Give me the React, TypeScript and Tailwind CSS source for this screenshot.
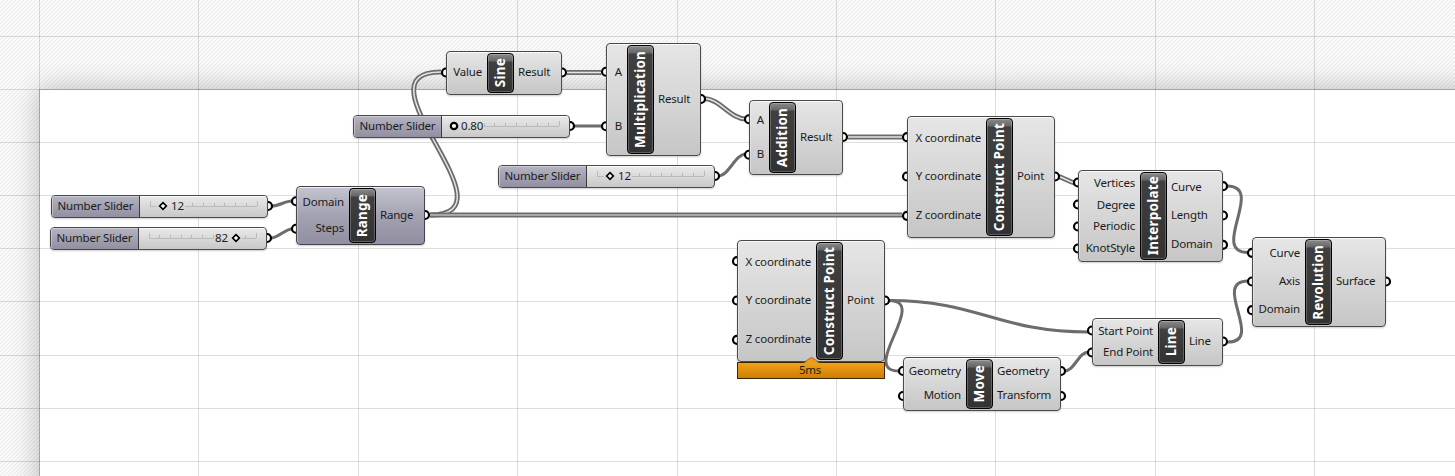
type NodeData = {
  title: string;
  x: number;
  y: number;
  w: number;
  h: number;
  left: number;
  inputs: string[];
  outputs: string[];
  selected?: boolean;
};

type SliderData = {
  x: number;
  y: number;
  value: string;
  knob: number;
  text: number;
  round?: boolean;
};

type Wire = { from: [number, number]; to: [number, number]; bend: number; kind: "single" | "double" | "tree" };

const NODES: NodeData[] = [
  { title: "Sine", x: 446, y: 51, w: 116, h: 44, left: 41, inputs: ["Value"], outputs: ["Result"] },
  { title: "Multiplication", x: 606, y: 43, w: 95, h: 113, left: 21, inputs: ["A", "B"], outputs: ["Result"] },
  { title: "Addition", x: 749, y: 100, w: 94, h: 75, left: 20, inputs: ["A", "B"], outputs: ["Result"] },
  { title: "Construct Point", x: 907, y: 116, w: 148, h: 122, left: 79, inputs: ["X coordinate", "Y coordinate", "Z coordinate"], outputs: ["Point"] },
  { title: "Interpolate", x: 1078, y: 170, w: 145, h: 92, left: 62, inputs: ["Vertices", "Degree", "Periodic", "KnotStyle"], outputs: ["Curve", "Length", "Domain"] },
  { title: "Revolution", x: 1252, y: 237, w: 134, h: 90, left: 53, inputs: ["Curve", "Axis", "Domain"], outputs: ["Surface"] },
  { title: "Construct Point", x: 737, y: 240, w: 148, h: 122, left: 79, inputs: ["X coordinate", "Y coordinate", "Z coordinate"], outputs: ["Point"] },
  { title: "Move", x: 903, y: 357, w: 158, h: 54, left: 63, inputs: ["Geometry", "Motion"], outputs: ["Geometry", "Transform"] },
  { title: "Line", x: 1092, y: 318, w: 131, h: 48, left: 66, inputs: ["Start Point", "End Point"], outputs: ["Line"] },
  { title: "Range", x: 296, y: 186, w: 129, h: 59, left: 53, inputs: ["Domain", "Steps"], outputs: ["Range"], selected: true },
];

const SLIDERS: SliderData[] = [
  { x: 51, y: 195, value: "12", knob: 112, text: 119 },
  { x: 50, y: 227, value: "82", knob: 186, text: 164 },
  { x: 353, y: 115, value: "0.80", knob: 101, text: 107, round: true },
  { x: 498, y: 165, value: "12", knob: 112, text: 119 },
];

const WIRES: Wire[] = [
  { from: [272, 206], to: [292, 201], bend: 7, kind: "single" },
  { from: [271, 238], to: [292, 229], bend: 7, kind: "single" },
  { from: [430, 215], to: [441, 72], bend: 90, kind: "double" },
  { from: [430, 215], to: [902, 215], bend: 200, kind: "tree" },
  { from: [567, 72.5], to: [601, 72.5], bend: 15, kind: "double" },
  { from: [575, 126], to: [602, 126], bend: 12, kind: "single" },
  { from: [704, 98.5], to: [746, 119], bend: 16, kind: "double" },
  { from: [718, 176], to: [746, 154], bend: 11, kind: "single" },
  { from: [848, 137], to: [902, 137], bend: 25, kind: "double" },
  { from: [1058, 176.5], to: [1075, 183], bend: 3, kind: "double" },
  { from: [1227, 186], to: [1248, 252.5], bend: 39, kind: "single" },
  { from: [1228, 342], to: [1248, 281], bend: 37, kind: "single" },
  { from: [889, 300.5], to: [899, 371], bend: 41, kind: "single" },
  { from: [889, 300.5], to: [1088, 332], bend: 90, kind: "single" },
  { from: [1064, 371], to: [1089, 352], bend: 11, kind: "single" },
];

const GRID_X = [39, 198, 358, 517, 677, 836, 995, 1155, 1314];
const GRID_Y = [36, 89, 142, 195, 248, 301, 355, 408, 461];

const wirePath = ({ from, to, bend }: Wire) =>
  `M${from[0]} ${from[1]}C${from[0] + bend} ${from[1]} ${to[0] - bend} ${to[1]} ${to[0]} ${to[1]}`;

const portY = (node: NodeData, index: number, count: number) =>
  node.y + 1.5 + ((node.h - 4) / count) * (index + 0.5);

function Wires() {
  return (
    <svg className="absolute inset-0" width="1455" height="476" fill="none">
      <g stroke="#000" strokeOpacity="0.13" shapeRendering="crispEdges">
        {GRID_X.map((x) => (
          <path key={x} d={`M${x + 0.5} 0V476`} />
        ))}
        {GRID_Y.map((y) => (
          <path key={y} d={`M0 ${y + 0.5}H1455`} />
        ))}
      </g>
      {WIRES.map((wire, i) => (
        <g key={i}>
          <path d={wirePath(wire)} stroke="#6c6c6c" strokeWidth={wire.kind === "single" ? 3 : 5} />
          {wire.kind !== "single" && (
            <path d={wirePath(wire)} stroke={wire.kind === "tree" ? "#bcbcbc" : "#e6e6e6"} strokeWidth="1.5" />
          )}
        </g>
      ))}
      <g stroke="#000" strokeWidth="2.2" fill="#fff">
        {NODES.map((node, i) => (
          <g key={i}>
            {node.inputs.map((_, k) => (
              <circle key={k} cx={node.x} cy={portY(node, k, node.inputs.length)} r="4" />
            ))}
            {node.outputs.map((_, k) => (
              <circle key={k} cx={node.x + node.w} cy={portY(node, k, node.outputs.length)} r="4" />
            ))}
          </g>
        ))}
        {SLIDERS.map((s, i) => (
          <circle key={i} cx={s.x + 217} cy={s.y + 11} r="4" />
        ))}
      </g>
    </svg>
  );
}

function Component({ node }: { node: NodeData }) {
  const surface = node.selected
    ? "border-[#44444c] bg-linear-to-b from-[#c5c5cf] via-[#a3a2b2] to-[#918fa1]"
    : "border-[#4a4a4a] bg-linear-to-b from-[#e6e6e6] to-[#c6c6c6]";
  return (
    <div
      className={`absolute flex rounded-[4px] border py-px shadow-[inset_0_1px_0_rgba(255,255,255,0.75),inset_1px_0_0_rgba(255,255,255,0.3),0_1px_2px_rgba(0,0,0,0.2)] ${surface}`}
      style={{ left: node.x, top: node.y, width: node.w, height: node.h }}
    >
      <div className="flex flex-col pr-[5px] pb-[2px] text-right" style={{ width: node.left - 1 }}>
        {node.inputs.map((label) => (
          <div key={label} className="flex flex-1 items-center justify-end whitespace-nowrap leading-none">
            {label}
          </div>
        ))}
      </div>
      <div className="flex w-[27px] shrink-0 items-center justify-center rounded-[4px] border border-black bg-[linear-gradient(180deg,#8a8a8a_0px,#666_7px,#404040_8px,#323232_100%)] shadow-[inset_0_0_0_1px_rgba(255,255,255,0.22)]">
        <span className="rotate-180 whitespace-nowrap text-[13.5px] leading-none font-bold tracking-[0.2px] text-white [writing-mode:vertical-rl]">
          {node.title}
        </span>
      </div>
      <div className="flex flex-1 flex-col pb-[2px] pl-[4px]">
        {node.outputs.map((label) => (
          <div key={label} className="flex flex-1 items-center whitespace-nowrap leading-none">
            {label}
          </div>
        ))}
      </div>
    </div>
  );
}

function Slider({ slider }: { slider: SliderData }) {
  const ticks = Array.from({ length: 11 }, (_, i) => 9.5 + i * 10.7);
  const knob = slider.knob - 88;
  const text = slider.text - 88;
  const textEnd = text + (slider.round ? 23 : 14);
  const clearStart = Math.min(text - 1, knob - 7);
  const clearEnd = Math.max(textEnd, knob + 5);
  return (
    <div
      className="absolute flex h-[23px] w-[217px] overflow-hidden rounded-[4px] border border-[#4a4a4a] bg-linear-to-b from-[#eaeaea] to-[#c8c8c8] shadow-[0_1px_2px_rgba(0,0,0,0.2)]"
      style={{ left: slider.x, top: slider.y }}
    >
      <div className="flex w-[88px] items-center justify-center border-r border-[#3c3c3c] bg-linear-to-b from-[#b4b3c1] to-[#918fa1] pb-[2px] leading-none whitespace-nowrap shadow-[inset_1px_1px_0_rgba(255,255,255,0.35)]">
        Number Slider
      </div>
      <div className="relative flex flex-1 items-center pb-[2px] shadow-[inset_0_1px_0_rgba(255,255,255,0.8)]">
        <svg className="absolute inset-0" width="127" height="21" fill="none">
          <g stroke="#bababa">
            {ticks.map((x, i) => {
              const px = Math.round(x) + 0.5;
              const hidden = px > clearStart && px < clearEnd;
              return hidden ? null : <path key={i} d={`M${px} ${i === 0 || i === 10 ? 5 : 7}V10`} />;
            })}
            {clearStart > 10 && <path d={`M10 10.500H${clearStart}`} />}
            <path d={`M${clearEnd} 10.500H117`} />
          </g>
          {slider.round ? (
            <circle cx={knob - 1} cy="10" r="3.2" stroke="#000" strokeWidth="2.2" fill="#fff" />
          ) : (
            <path d={`M${knob - 1} 6.700L${knob + 2.3} 10L${knob - 1} 13.300L${knob - 4.3} 10Z`} stroke="#000" strokeWidth="1.7" fill="#fff" />
          )}
        </svg>
        <span className="relative leading-none" style={{ marginLeft: text }}>
          {slider.value}
        </span>
      </div>
    </div>
  );
}

export default function App() {
  return (
    <div className="relative flex h-[476px] w-[1455px] overflow-hidden bg-white bg-[repeating-linear-gradient(135deg,#ececec_0px,#fff_1.414px,#ececec_2.828px)] pt-[89px] pl-[39px] font-['Noto_Sans','Open_Sans',sans-serif] text-[11.5px] tracking-[-0.2px] text-[#1c1c1c]">
      <div className="-mr-10 -mb-10 flex-1 border-t border-l border-[#bdbdbd] bg-white shadow-[0_0_26px_rgba(0,0,0,0.25)]" />
      <Wires />
      {SLIDERS.map((slider, i) => (
        <Slider key={i} slider={slider} />
      ))}
      {NODES.map((node, i) => (
        <Component key={i} node={node} />
      ))}
      <div className="absolute top-[362px] left-[737px] flex h-[17px] w-[148px] items-center justify-center border border-[#3a2600] bg-linear-to-b from-[#f2a01a] to-[#cd7f00] pb-[2px] leading-none">
        <svg className="absolute -top-[6px] left-[65px]" width="18" height="8">
          <path d="M0 7L8.500 0L17 7V8H0Z" fill="#ef9d17" />
          <path d="M0 6L8.500 0.300L17 6" fill="none" stroke="#8a5a10" strokeWidth="0.800" />
        </svg>
        <span className="relative -left-[1px]">5ms</span>
      </div>
    </div>
  );
}
